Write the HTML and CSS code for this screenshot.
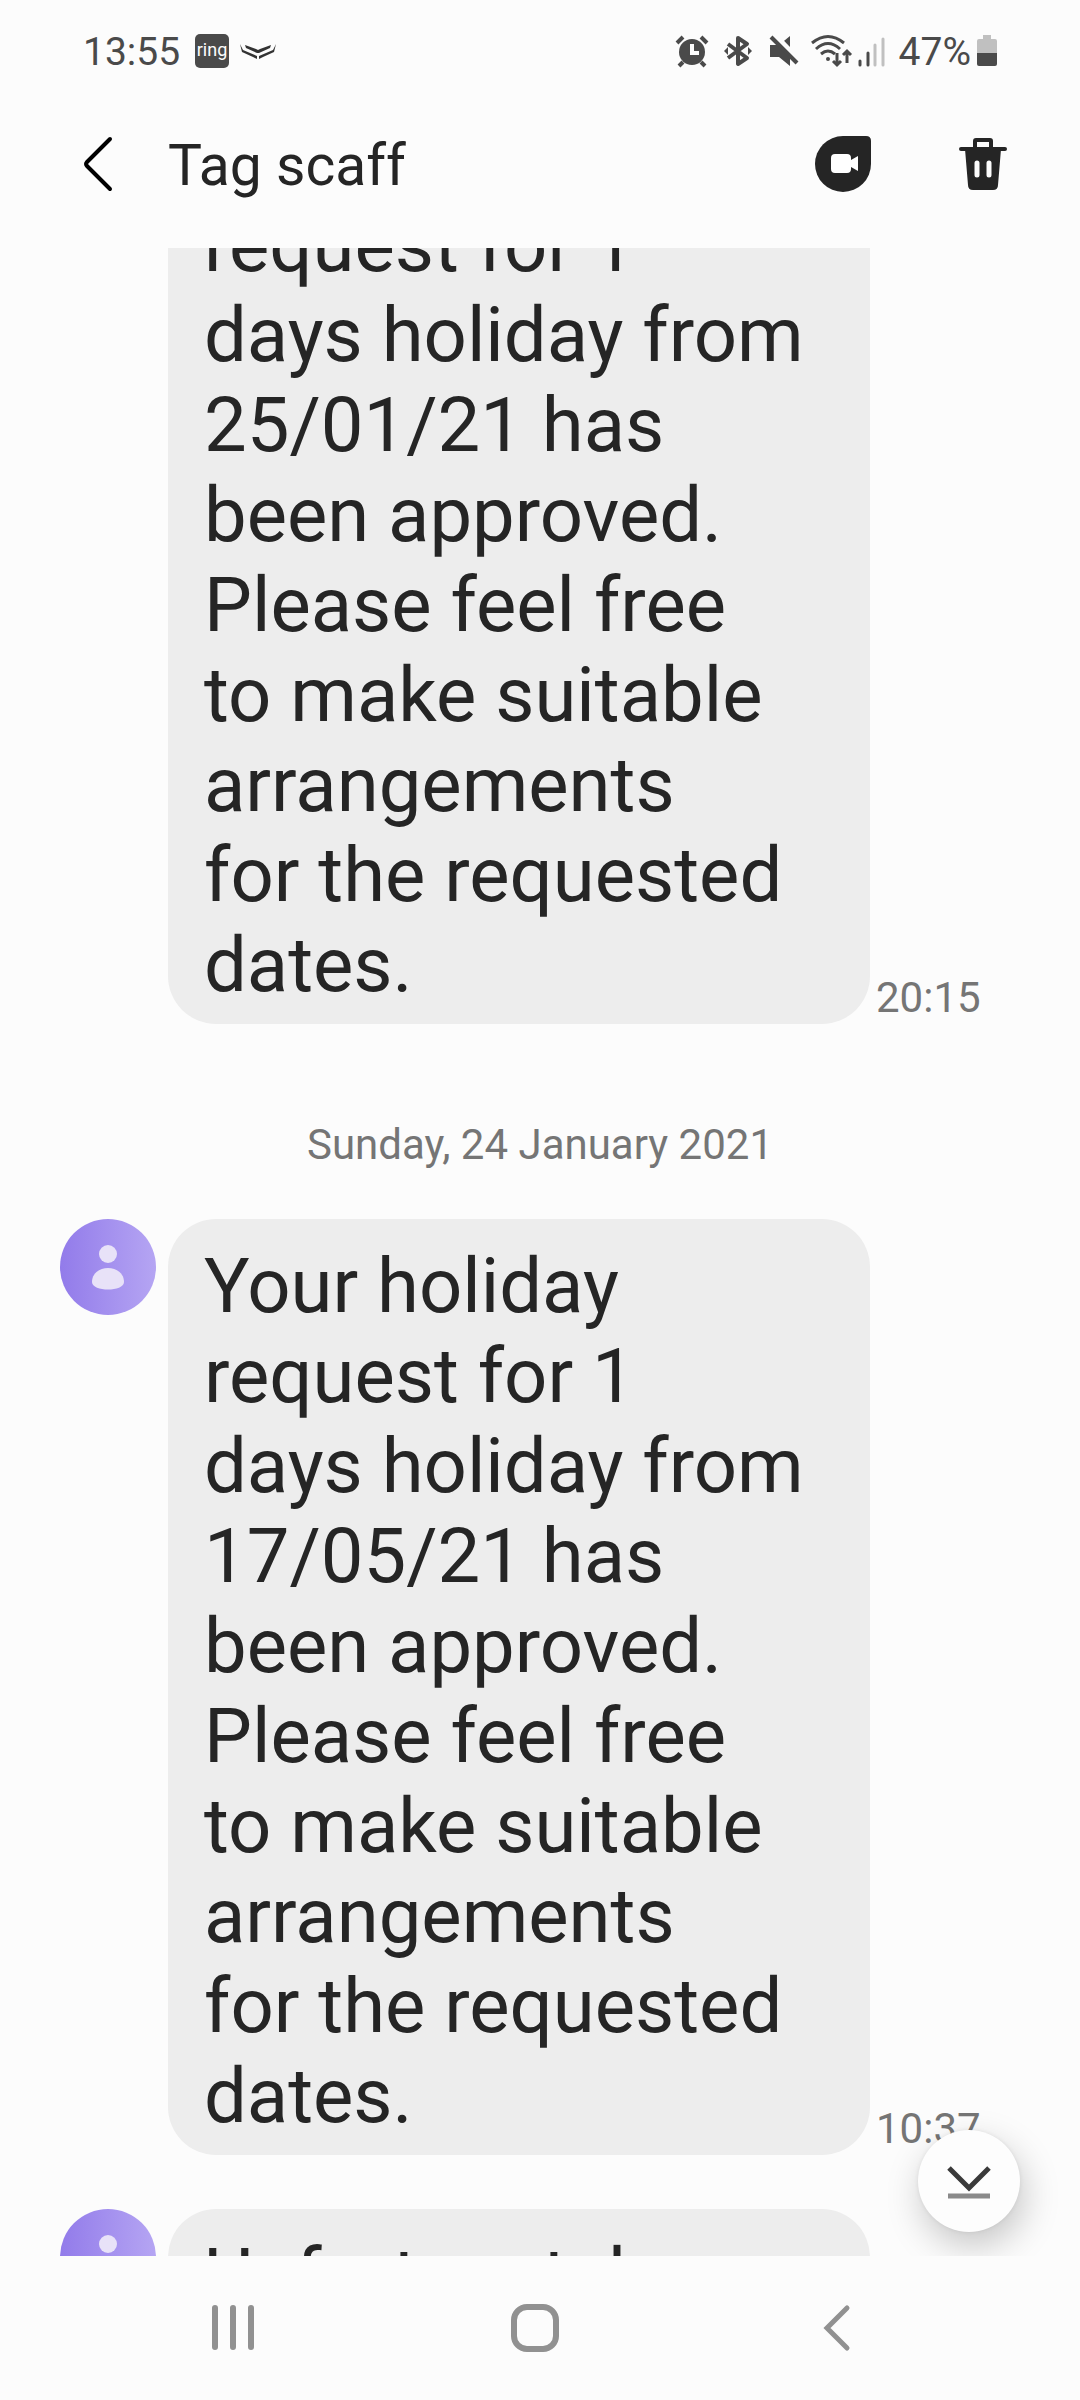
FILE: index.html
```html
<!DOCTYPE html>
<html lang="en">
<head>
<meta charset="utf-8">
<meta name="viewport" content="width=device-width, initial-scale=1">
<title>Tag scaff</title>
<link rel="stylesheet" href="styles.css">
</head>
<body>
<div class="app">
  <div class="status">
    <span class="clock">13:55</span>
    <svg class="ring" width="34" height="34" viewBox="0 0 34 34" aria-hidden="true">
      <rect width="34" height="34" rx="5" fill="#4a4a4a"/>
      <text x="17" y="22" text-anchor="middle" class="ring-text">ring</text>
    </svg>
    <svg class="wings" width="38" height="18" viewBox="0 0 38 18" fill="#333" aria-hidden="true">
      <path d="M6 3 17 7 19 8 21 7 32 3 31 6 20 11 18 11 7 6Z"/>
      <path d="M1 2 4 8 18 14V17L14 15 3 10Z"/>
      <path d="M37 2 34 8 20 14V17L24 15 35 10Z"/>
    </svg>
    <div class="system">
      <svg width="46" height="36" viewBox="0 0 46 36" aria-hidden="true">
        <circle cx="23" cy="19" r="13" fill="#4a4a4a"/>
        <path d="M8 10 14 4M38 10 32 4M14 29 10 33M32 29 36 33" stroke="#4a4a4a" stroke-width="4"/>
        <path d="M23 11V20H30" fill="none" stroke="#fcfcfc" stroke-width="4"/>
      </svg>
      <svg width="46" height="36" viewBox="0 0 46 36" aria-hidden="true">
        <path d="M13 11 32 25 23 31V5L32 11 13 25" fill="none" stroke="#4a4a4a" stroke-width="4" stroke-linejoin="round"/>
        <path d="M9 18 13 14V22ZM37 18 33 14V22Z" fill="#4a4a4a"/>
      </svg>
      <svg width="46" height="36" viewBox="0 0 46 36" aria-hidden="true">
        <path d="M9 12H18L29 3V33L18 24H9Z" fill="#4a4a4a"/>
        <path d="M13 1 40 29" stroke="#fcfcfc" stroke-width="5"/>
        <path d="M10 4 36 30" stroke="#4a4a4a" stroke-width="4"/>
      </svg>
      <svg width="48" height="36" viewBox="0 0 48 36" fill="none" stroke="#4a4a4a" stroke-width="3" aria-hidden="true">
        <path d="M5 10Q21-3 37 10M9 16Q21 5 33 16M14 21Q21 15 28 21"/>
        <circle cx="21" cy="26" r="2" fill="#4a4a4a" stroke="none"/>
        <path d="M30 20V31M26 28 30 32 34 28M40 30V19M36 22 40 18 44 22"/>
      </svg>
      <svg width="36" height="36" viewBox="0 0 36 36" stroke-width="3" stroke-linecap="round" aria-hidden="true">
        <path d="M5 28V32M13 20V32" stroke="#4a4a4a"/>
        <path d="M20 12V32M28 6V32" stroke="#c0c0c0"/>
      </svg>
      <span class="percent">47%</span>
      <svg width="22" height="36" viewBox="0 0 22 36" aria-hidden="true">
        <path d="M7 2H15V6H19Q21 6 21 8V20H1V8Q1 6 3 6H7Z" fill="#c0c0c0"/>
        <path d="M1 20H21V31Q21 33 19 33H3Q1 33 1 31Z" fill="#4a4a4a"/>
      </svg>
    </div>
  </div>

  <header class="header">
    <button class="icon-btn" aria-label="Back">
      <svg width="34" height="60" viewBox="0 0 34 60"><path d="M30 5 7 28Q5 30 7 32L30 55" fill="none" stroke="#000" stroke-width="4" stroke-linecap="round"/></svg>
    </button>
    <h1 class="title">Tag scaff</h1>
    <button class="icon-btn" aria-label="Video call">
      <svg width="56" height="56" viewBox="0 0 56 56">
        <path d="M28 0H51Q56 0 56 5V28A28 28 0 1 1 28 0Z" fill="#252525"/>
        <path d="M20 18H32Q36 18 36 22V24L43 20V35L36 31V33Q36 37 32 37H20Q16 37 16 33V22Q16 18 20 18Z" fill="#fff"/>
      </svg>
    </button>
    <button class="icon-btn" aria-label="Delete">
      <svg width="48" height="54" viewBox="0 0 48 54">
        <path d="M16 11V4Q16 3 17 3H31Q32 3 32 4V11" fill="none" stroke="#252525" stroke-width="4"/>
        <path d="M2 12H46" stroke="#252525" stroke-width="4" stroke-linecap="round"/>
        <path d="M6 12H42L39 48Q39 53 34 53H14Q9 53 9 48Z" fill="#252525"/>
        <path d="M18 26V38M30 26V38" stroke="#fcfcfc" stroke-width="5" stroke-linecap="round"/>
      </svg>
    </button>
  </header>

  <main class="thread">
    <div class="messages">
      <article class="message continued">
        <div class="avatar-slot"></div>
        <p class="bubble">request for 1<br>days holiday from<br>25/01/21 has<br>been approved.<br>Please feel free<br>to make suitable<br>arrangements<br>for the requested<br>dates.</p>
        <time class="time">20:15</time>
      </article>
      <h2 class="day">Sunday, 24 January 2021</h2>
      <article class="message">
        <svg class="avatar-slot" viewBox="0 0 96 96" aria-hidden="true">
          <defs><linearGradient id="violet"><stop offset="0" stop-color="#927bea"/><stop offset="1" stop-color="#b5a5f3"/></linearGradient></defs>
          <circle cx="48" cy="48" r="48" fill="url(#violet)"/>
          <circle cx="48" cy="35" r="9" fill="#e8e2f8"/>
          <path d="M32 63C32 54 40 49 48 49S64 54 64 63C64 73 32 73 32 63Z" fill="#e8e2f8"/>
        </svg>
        <p class="bubble">Your holiday<br>request for 1<br>days holiday from<br>17/05/21 has<br>been approved.<br>Please feel free<br>to make suitable<br>arrangements<br>for the requested<br>dates.</p>
        <time class="time">10:37</time>
      </article>
      <article class="message">
        <svg class="avatar-slot" viewBox="0 0 96 96" aria-hidden="true">
          <circle cx="48" cy="48" r="48" fill="url(#violet)"/>
          <circle cx="48" cy="35" r="9" fill="#e8e2f8"/>
          <path d="M32 63C32 54 40 49 48 49S64 54 64 63C64 73 32 73 32 63Z" fill="#e8e2f8"/>
        </svg>
        <p class="bubble">Unfortunately</p>
      </article>
    </div>
    <button class="to-latest" aria-label="Go to latest message">
      <svg width="44" height="34" viewBox="0 0 44 34" fill="none"><path d="M2 2 22 22 42 2" stroke="#3a3a3a" stroke-width="5"/><path d="M1 30H43" stroke="#8a8a8a" stroke-width="5"/></svg>
    </button>
  </main>

  <nav class="nav">
    <button class="icon-btn" aria-label="Recent apps">
      <svg width="48" height="48" viewBox="0 0 48 48"><path d="M6 4V43M24 4V43M42 4V43" stroke="#919191" stroke-width="6" stroke-linecap="round"/></svg>
    </button>
    <button class="icon-btn" aria-label="Home">
      <svg width="48" height="48" viewBox="0 0 48 48"><rect x="3" y="3" width="42" height="42" rx="13" fill="none" stroke="#919191" stroke-width="6"/></svg>
    </button>
    <button class="icon-btn" aria-label="Back">
      <svg width="48" height="48" viewBox="0 0 48 48"><path d="M34 4 14 24 34 44" fill="none" stroke="#919191" stroke-width="5" stroke-linecap="round"/></svg>
    </button>
  </nav>
</div>
</body>
</html>
```
FILE: styles.css
```css
* { box-sizing: border-box; }
body {
  margin: 0;
  background: #fcfcfc;
  color: #252525;
  font-family: Roboto, "Liberation Sans", sans-serif;
}
svg { display: block; flex: none; }

.app {
  display: flex;
  flex-direction: column;
  height: 100vh;
}

.status {
  display: flex;
  align-items: center;
  height: 102px;
  padding: 0 82px 0 83px;
  color: #4a4a4a;
  font-size: 39px;
  line-height: 48px;
}
.clock, .percent { padding-top: 2px; }
.ring { margin-left: 15px; }
.ring-text { fill: #fcfcfc; font-size: 18px; }
.wings { margin-left: 10px; }
.system {
  display: flex;
  align-items: center;
  margin-left: auto;
}
.percent { margin: 0 5px 0 8px; }

.header {
  display: flex;
  align-items: center;
  height: 146px;
  padding: 0 73px 22px 80px;
  gap: 88px;
}
.icon-btn {
  display: grid;
  place-items: center;
  padding: 0;
  border: 0;
  background: none;
  cursor: pointer;
}
.title {
  flex: 1;
  margin: 0 0 0 -34px;
  padding-top: 4px;
  font-size: 57px;
  line-height: 68px;
  font-weight: 400;
}

.thread {
  position: relative;
  flex: 1;
  min-height: 0;
  overflow: hidden;
}
.messages {
  display: flex;
  flex-direction: column;
}
.message {
  display: flex;
  align-items: flex-start;
  padding-left: 60px;
  margin-bottom: 54px;
}
.message.continued {
  margin-top: -70px;
  margin-bottom: 0;
}
.avatar-slot {
  flex: none;
  width: 96px;
  height: 96px;
  margin-right: 12px;
}
.bubble {
  width: 65vw;
  margin: 0;
  padding: 22px 36px 14px;
  border-radius: 48px;
  background: #ededed;
  font-size: 76px;
  line-height: 90px;
}
.time {
  align-self: flex-end;
  padding: 0 0 1px 6px;
  color: #757575;
  font-size: 42px;
  line-height: 50px;
}
.day {
  margin: 0;
  padding: 96px 0 49px;
  color: #757575;
  font-size: 42px;
  line-height: 50px;
  font-weight: 400;
  text-align: center;
}
.to-latest {
  position: absolute;
  right: 60px;
  bottom: 24px;
  display: grid;
  place-items: center;
  width: 102px;
  height: 102px;
  padding: 4px 0 0;
  border: 0;
  border-radius: 50%;
  background: #fdfdfd;
  box-shadow: 4px 14px 36px rgba(0, 0, 0, 0.22), 0 0 4px rgba(0, 0, 0, 0.08);
  cursor: pointer;
}

.nav {
  display: grid;
  grid-template-columns: repeat(3, 1fr);
  height: 144px;
  padding: 0 92px 0 82px;
}
```
